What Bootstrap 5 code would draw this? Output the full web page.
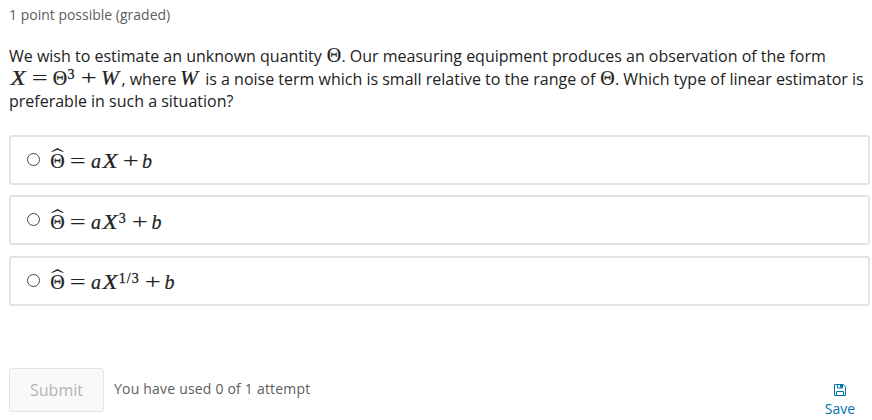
<!DOCTYPE html>
<html lang="en">
<head>
<meta charset="utf-8">
<title>Problem</title>
<link rel="stylesheet" href="https://cdn.jsdelivr.net/npm/bootstrap@5.3.0/dist/css/bootstrap.min.css">
<style>
body{font-family:"Open Sans",sans-serif;color:#222;background:#fff;height:420px;overflow:hidden}
.problem{width:861px;margin-left:9px;padding-top:5px}
.meta{font-size:14px;line-height:20px;color:#5e5e5e}
.prompt{font-size:16px;line-height:22.6px;margin:20px -5px 22px 0;white-space:nowrap}
.math{font-family:"Liberation Serif",serif;font-size:20px;line-height:1;color:#222;white-space:nowrap}
.math span{display:inline-flex;justify-content:center;line-height:1}
.math i{-webkit-text-stroke:.2px #222}
.th{width:15.5px}
.th i{font-style:normal;-webkit-text-stroke:.2px #222}
.prompt .math .th{padding-left:.5px}
.vx{width:17.5px}.vx i{transform:scaleX(1.24)}
.vw{width:20.5px}.vw i{transform:translateX(-1.3px) scaleX(1.08)}
.va{width:10.5px}.vb{width:10px}
.op{width:15px;margin:0 5.3px}
.op.plus{margin:0 4px 0 4.3px}
.prompt .op.plus{margin:0 5px 0 4.8px}
.op b{font-weight:400;transform:scaleX(1.42)}
.math .sup{font-size:14px;line-height:.7;letter-spacing:1px;position:relative;top:-6px;padding-right:1.5px;-webkit-text-stroke:.3px #222}
.choice .math{padding-left:.7px;padding-top:2px}
.choice+.choice .math{padding-top:4px}
.choice+.choice+.choice .math{padding-top:2px}
.prompt .math .sup{padding-right:.5px}
.hat{position:relative}
.hat svg{position:absolute;left:1px;top:-3px}
.choice{height:50px;border:2px solid #e3e3e3;border-radius:3px;padding-left:16px}
.choices{gap:10.5px}
.radio{appearance:none;width:13px;height:13px;border:1px solid #444;border-radius:50%;margin:0 9px 1px 0;background:#fff}
.actions{margin-top:57px}
.submit{width:95px;height:44px;border:1px solid #e4e4e4;border-radius:3px;background:#f9f9f9;color:#b4b4b4;font-size:16px;padding:0}
.attempts{font-size:14px;letter-spacing:.2px;color:#5e5e5e;margin:-3px 0 0 10px}
.save{font-size:14px;line-height:19px;color:#0075b4;width:60px;padding-top:21px;margin-bottom:-1px;gap:3px}
</style>
<script src="https://cdn.jsdelivr.net/npm/bootstrap@5.3.0/dist/js/bootstrap.bundle.min.js"></script>
</head>
<body>
<main class="problem">
<div class="meta">1 point possible (graded)</div>
<p class="prompt">We wish to estimate an unknown quantity <span class="math"><span class="th"><i>Θ</i></span></span>. Our measuring equipment produces an observation of the form<br><span class="math"><span class="vx"><i>X</i></span><span class="op"><b>=</b></span><span class="th"><i>Θ</i></span><span class="sup">3</span><span class="op plus"><b>+</b></span><span class="vw"><i>W</i></span></span>, where <span class="math"><span class="vw"><i>W</i></span></span> is a noise term which is small relative to the range of <span class="math"><span class="th"><i>Θ</i></span></span>. Which type of linear estimator is<br>preferable in such a situation?</p>
<div class="choices d-flex flex-column">
<label class="choice d-flex align-items-center"><input class="radio" type="radio" name="c"><span class="math"><span class="th hat"><i>Θ</i><svg width="13" height="4" viewBox="0 0 13 4"><path d="M.5 3.2 6.5 0l6 3.2-.3.7-5.7-2.2L.8 3.9z" fill="#222"/></svg></span><span class="op"><b>=</b></span><span class="va"><i>a</i></span><span class="vx"><i>X</i></span><span class="op plus"><b>+</b></span><span class="vb"><i>b</i></span></span></label>
<label class="choice d-flex align-items-center"><input class="radio" type="radio" name="c"><span class="math"><span class="th hat"><i>Θ</i><svg width="13" height="4" viewBox="0 0 13 4"><path d="M.5 3.2 6.5 0l6 3.2-.3.7-5.7-2.2L.8 3.9z" fill="#222"/></svg></span><span class="op"><b>=</b></span><span class="va"><i>a</i></span><span class="vx"><i>X</i></span><span class="sup">3</span><span class="op plus"><b>+</b></span><span class="vb"><i>b</i></span></span></label>
<label class="choice d-flex align-items-center"><input class="radio" type="radio" name="c"><span class="math"><span class="th hat"><i>Θ</i><svg width="13" height="4" viewBox="0 0 13 4"><path d="M.5 3.2 6.5 0l6 3.2-.3.7-5.7-2.2L.8 3.9z" fill="#222"/></svg></span><span class="op"><b>=</b></span><span class="va"><i>a</i></span><span class="vx"><i>X</i></span><span class="sup">1/3</span><span class="op plus"><b>+</b></span><span class="vb"><i>b</i></span></span></label>
</div>
<div class="actions d-flex align-items-center">
<button class="submit" type="button" disabled>Submit</button>
<div class="attempts">You have used 0 of 1 attempt</div>
<div class="save ms-auto d-flex flex-column align-items-center"><svg width="12" height="12" viewBox="0 0 12 12"><path d="M.5.5h8.7l2.3 2.3v8.7H.5zM2.5 11.5V7.5h7v4M3.5.5v3.5h5V.5" fill="none" stroke="#0075b4"/><path d="M6 1h2v2.5H6z" fill="#0075b4"/></svg><span>Save</span></div>
</div>
</main>
</body>
</html>
